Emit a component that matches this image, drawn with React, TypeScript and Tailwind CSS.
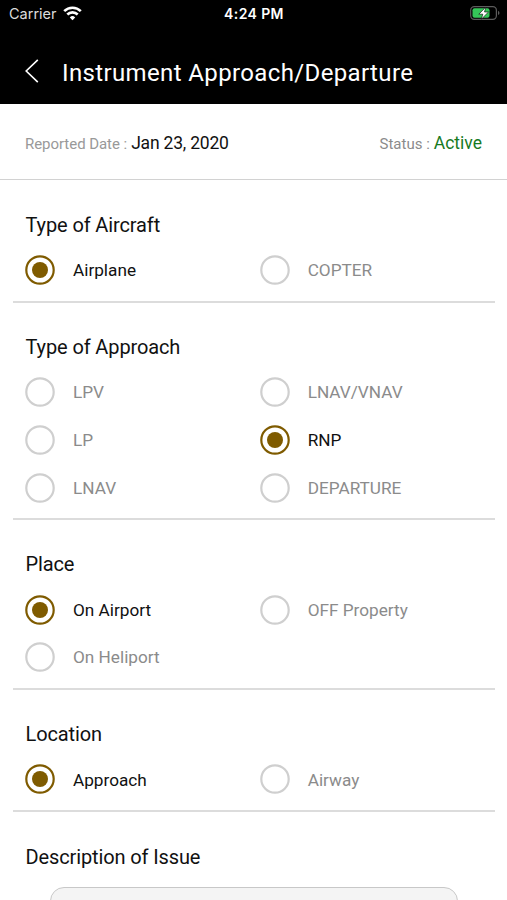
const SECTIONS = [
    {
        title: "Type of Aircraft",
        options: ["Airplane", "COPTER"],
        selected: "Airplane",
    },
    {
        title: "Type of Approach",
        options: ["LPV", "LNAV/VNAV", "LP", "RNP", "LNAV", "DEPARTURE"],
        selected: "RNP",
    },
    {
        title: "Place",
        options: ["On Airport", "OFF Property", "On Heliport"],
        selected: "On Airport",
    },
    {
        title: "Location",
        options: ["Approach", "Airway"],
        selected: "Approach",
    },
]

function WifiIcon() {
    return (
        <svg width="19" height="15" viewBox="0 0 19 15" fill="none" stroke="white" strokeWidth="2.6" className="-mt-0.5">
            <path d="M1.2 5.2a11.8 11.8 0 0 1 16.6 0" />
            <path d="M4.3 8.5a7.4 7.4 0 0 1 10.4 0" />
            <path d="M9.5 14.2l-2.7-2.8a3.8 3.8 0 0 1 5.4 0z" fill="white" stroke="none" />
        </svg>
    )
}

function BatteryIcon() {
    return (
        <svg width="32" height="16" viewBox="0 0 32 16" className="-mt-1">
            <rect x="1.7" y="2.7" width="25.7" height="12.6" rx="3.6" fill="none" stroke="#5c5c5c" strokeWidth="1.2" />
            <path d="M29 6.8c2 .8 2 3.5 0 4.3z" fill="#5c5c5c" />
            <rect x="3.5" y="4.3" width="17" height="9.4" rx="2" fill="#35c759" />
            <path d="M16.8 3.1L9.8 10.2h4l-1.500 5 7.200-7.200h-4z" fill="white" stroke="black" strokeWidth="0.6" />
        </svg>
    )
}

function StatusBar() {
    return (
        <div className="grid h-7 grid-cols-3 items-center pr-1.5 pl-[9px] font-['Inter',sans-serif]">
            <div className="flex items-center gap-1.5">
                <span className="text-[14.5px] text-[#dcdcdc]">Carrier</span>
                <WifiIcon />
            </div>
            <span className="-ml-0.5 pb-px text-center text-[14px] font-semibold tracking-[0.4px]">4:24 PM</span>
            <div className="flex justify-end">
                <BatteryIcon />
            </div>
        </div>
    )
}

function Radio({ label, checked }: { label: string; checked: boolean }) {
    return (
        <div className="flex h-[47.7px] items-center">
            <svg width="30" height="30" viewBox="0 0 30 30" className="shrink-0">
                <circle cx="15" cy="15" r="13.7" fill="none" stroke={checked ? "#7f5b00" : "#cfcfcf"} strokeWidth="2.2" />
                {checked && <circle cx="15" cy="15" r="8" fill="#7f5b00" />}
            </svg>
            <span className={checked ? "pt-0.5 pl-[18px] text-[17.2px] text-[#111]" : "pt-0.5 pl-[18px] text-[17.2px] text-[#8b8b8b]"}>
                {label}
            </span>
        </div>
    )
}

export default function App() {
    return (
        <div className="h-[900px] w-[507px] overflow-hidden bg-white font-['Roboto',sans-serif] text-[#111]">
            <header className="h-[103.5px] bg-black text-white">
                <StatusBar />
                <div className="flex h-[75px] items-center pl-[25px]">
                    <svg width="14" height="24" viewBox="0 0 14 24" fill="none" stroke="white" strokeWidth="1.6" className="mt-[11px]">
                        <path d="M12.8 .8L1.2 12l11.6 11.2" />
                    </svg>
                    <h1 className="pt-[14px] pl-[23px] text-[24px] leading-[28px] tracking-[0.37px]">Instrument Approach/Departure</h1>
                </div>
            </header>

            <div className="flex h-[76.5px] items-center justify-between border-b border-[#d2d2d2] px-[25px] pt-[3px]">
                <p className="flex items-baseline gap-1">
                    <span className="text-[15px] tracking-[-0.05px] text-[#999]">Reported Date :</span>
                    <span className="text-[17.5px] tracking-[-0.2px]">Jan 23, 2020</span>
                </p>
                <p className="flex items-baseline gap-1">
                    <span className="text-[15px] text-[#8b8b8b]">Status :</span>
                    <span className="text-[17.5px] text-[#177a1f]">Active</span>
                </p>
            </div>

            <main className="pt-[0.9px]">
                {SECTIONS.map((section) => (
                    <section key={section.title} className="mr-3 ml-[13px] border-b-2 border-[#dcdcdc] px-3 pt-[32px] pb-[7px]">
                        <h2 className="h-[33.4px] pl-[0.5px] text-[20px] leading-6 tracking-[-0.12px]">{section.title}</h2>
                        <div className="grid grid-cols-[234.7px_1fr]">
                            {section.options.map((option) => (
                                <Radio key={option} label={option} checked={option === section.selected} />
                            ))}
                        </div>
                    </section>
                ))}

                <section className="px-[25px] pt-[32.5px]">
                    <h2 className="pl-[0.5px] text-[20px] leading-6 tracking-[-0.12px]">Description of Issue</h2>
                    <div className="mt-[18.5px] mr-6 ml-[25px] h-[120px] rounded-[14px] border border-[#c8c8c8] bg-[#f4f4f4]" />
                </section>
            </main>
        </div>
    )
}
